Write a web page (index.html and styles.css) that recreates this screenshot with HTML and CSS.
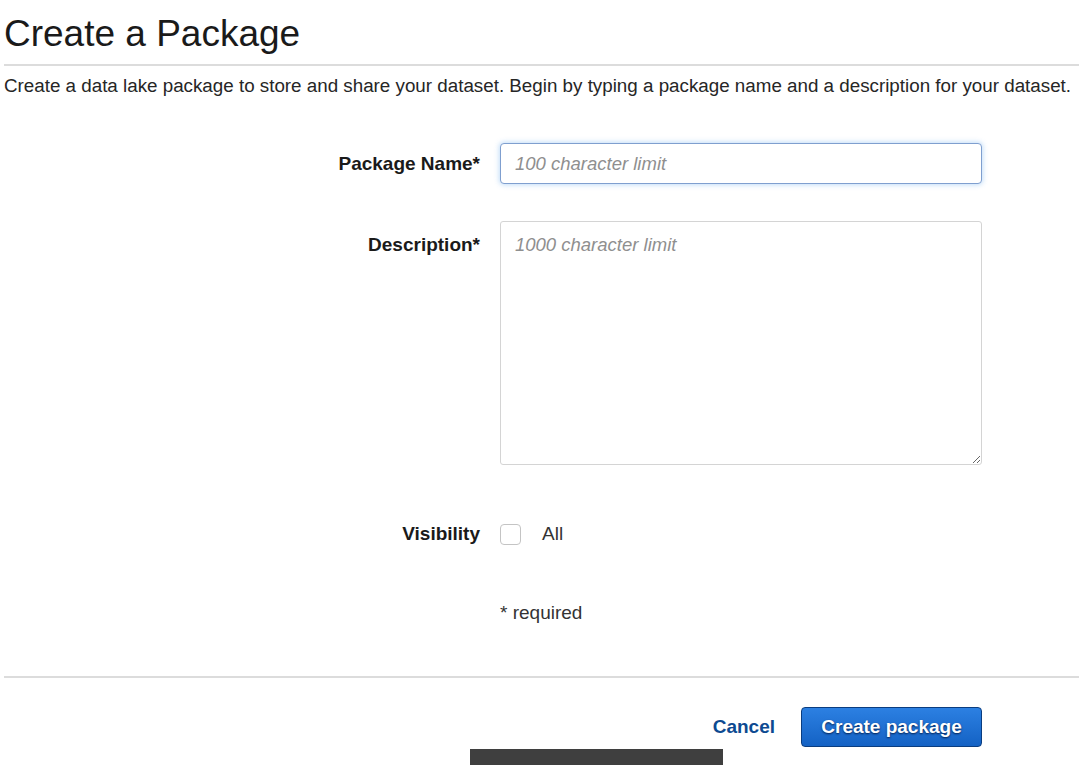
FILE: index.html
```html
<!DOCTYPE html>
<html>
<head>
<meta charset="utf-8">
<link rel="stylesheet" href="styles.css">
</head>
<body>
<div class="page">
  <h1 class="title">Create a Package</h1>
  <hr class="rule">
  <p class="intro">Create a data lake package to store and share your dataset. Begin by typing a package name and a description for your dataset.</p>
  <div class="form">
    <div class="row row-name">
      <label class="label">Package Name*</label>
      <div class="field"><input class="input focused" type="text" placeholder="100 character limit"></div>
    </div>
    <div class="row row-desc">
      <label class="label">Description*</label>
      <div class="field"><textarea class="textarea" placeholder="1000 character limit"></textarea></div>
    </div>
    <div class="row row-vis">
      <label class="label">Visibility</label>
      <div class="field check-field"><span class="checkbox"></span><span class="check-text">All</span></div>
    </div>
    <div class="row row-req">
      <span class="label"></span>
      <div class="field req">* required</div>
    </div>
  </div>
  <hr class="rule rule-bottom">
  <div class="actions">
    <a class="cancel">Cancel</a>
    <button class="primary">Create package</button>
  </div>
  <div class="darkbar"></div>
</div>
</body>
</html>
```

FILE: styles.css
```css
* { box-sizing: border-box; }
html, body { margin: 0; padding: 0; background: #fff; }
body {
  font-family: "Liberation Sans", Arial, sans-serif;
  color: #222;
  width: 1079px;
  height: 765px;
  overflow: hidden;
}
.page { padding-left: 4px; position: relative; height: 765px; }
.title {
  margin: 0;
  padding-top: 12px;
  font-size: 37px;
  font-weight: normal;
  line-height: 44px;
  color: #1a1a1a;
}
.rule {
  border: 0;
  height: 2px;
  background: #dcdcdc;
  margin: 8px 0 0 0;
}
.intro {
  margin: 9px 0 0 0;
  font-size: 18.8px;
  line-height: 22px;
  color: #262626;
  white-space: nowrap;
}
.form { margin-top: 46px; }
.row { display: flex; align-items: flex-start; }
.label {
  width: 496px;
  text-align: right;
  font-weight: bold;
  font-size: 19px;
  line-height: 22px;
  color: #1a1a1a;
  padding-right: 20px;
  flex: none;
}
.field { width: 482px; }
.row-name { align-items: center; }
.input {
  width: 482px;
  height: 41px;
  border: 1px solid #7f9fcf;
  border-radius: 4px;
  box-shadow: 0 0 5px 1px rgba(120, 180, 240, 0.45);
  padding: 0 14px;
  font-family: "Liberation Sans", Arial, sans-serif;
  font-size: 18.5px;
  outline: none;
  display: block;
}
.input::placeholder, .textarea::placeholder {
  color: #8f8f8f;
  font-style: italic;
}
.row-desc { margin-top: 37px; }
.row-desc .label { padding-top: 13px; }
.textarea {
  width: 482px;
  height: 244px;
  border: 1px solid #d4d4d4;
  border-radius: 3px;
  padding: 12px 14px;
  font-family: "Liberation Sans", Arial, sans-serif;
  font-size: 18.5px;
  line-height: 22px;
  resize: vertical;
  display: block;
  outline: none;
}
.row-vis { margin-top: 58px; align-items: center; }
.check-field { display: flex; align-items: center; }
.checkbox {
  width: 21px;
  height: 21px;
  border: 1px solid #c4c4c4;
  border-radius: 4px;
  background: #fff;
  display: inline-block;
}
.check-text { margin-left: 21px; font-size: 19px; line-height: 22px; color: #333; }
.row-req { margin-top: 57px; }
.req { font-size: 19px; line-height: 22px; color: #333; }
.rule-bottom { margin-top: 52px; }
.actions {
  display: flex;
  justify-content: flex-end;
  align-items: center;
  padding-right: 97px;
  margin-top: 29px;
}
.cancel {
  color: #0d4a91;
  font-weight: bold;
  font-size: 19px;
  margin-right: 26px;
}
.primary {
  width: 181px;
  height: 40px;
  border: 1px solid #0a3d80;
  border-radius: 4px;
  background: linear-gradient(#2c80e2, #1462c4);
  color: #fff;
  font-family: "Liberation Sans", Arial, sans-serif;
  font-weight: bold;
  font-size: 19px;
  text-shadow: 0 1px 2px rgba(0, 25, 70, 0.95);
}
.darkbar {
  position: absolute;
  left: 470px;
  top: 749px;
  width: 253px;
  height: 16px;
  background: #3f3f3f;
}
```
